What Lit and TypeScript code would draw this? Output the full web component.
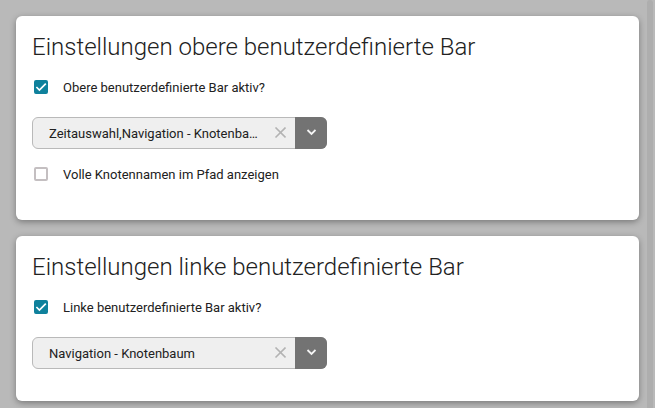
import { LitElement, html, css } from "lit";
import { customElement, property } from "lit/decorators.js";

@customElement("check-row")
class CheckRow extends LitElement {
  static styles = css`
    :host {
      display: block;
      margin-bottom: 21px;
    }
    .row {
      display: flex;
      align-items: center;
      gap: 15px;
      height: 18px;
      padding-left: 2px;
      font-size: 13px;
      line-height: 18px;
    }
    .text {
      padding-top: 2px;
    }
    .box {
      display: grid;
      flex: none;
      width: 14px;
      height: 14px;
    }
    .box > * {
      grid-area: 1 / 1;
    }
    .input {
      appearance: none;
      box-sizing: border-box;
      width: 14px;
      height: 14px;
      margin: 0;
      border: 2px solid #c4bfc1;
      border-radius: 2px;
      background: #fff;
    }
    .input:checked {
      border-color: #0f819c;
      background: #0f819c;
    }
    .tick {
      visibility: hidden;
      pointer-events: none;
    }
    .input:checked + .tick {
      visibility: visible;
    }
  `;

  @property() label = "";
  @property({ type: Boolean }) checked = false;

  render() {
    return html`
      <label class="row">
        <span class="box">
          <input class="input" type="checkbox" .checked=${this.checked} />
          <svg class="tick" width="14" height="14" viewBox="0 0 14 14" aria-hidden="true">
            <path d="M2.4 7 5.4 10 11.8 3.6" fill="none" stroke="#fff" stroke-width="1.7" />
          </svg>
        </span>
        <span class="text">${this.label}</span>
      </label>
    `;
  }
}

@customElement("clearable-select")
class ClearableSelect extends LitElement {
  static styles = css`
    :host {
      display: block;
      margin-bottom: 16px;
    }
    .field {
      display: grid;
      grid-template-columns: 1fr 30px 32px;
      max-width: 295px;
      height: 32px;
    }
    .select {
      grid-area: 1 / 1 / 2 / 4;
      appearance: none;
      box-sizing: border-box;
      width: 100%;
      height: 32px;
      margin: 0;
      padding: 1px 65px 0 16px;
      border: 1px solid #b9b9b9;
      border-radius: 6px;
      background: #efefef;
      color: #212121;
      font: inherit;
      font-size: 13px;
      text-overflow: ellipsis;
      white-space: nowrap;
      overflow: hidden;
    }
    .clear {
      grid-area: 1 / 2;
      display: grid;
      place-items: center;
      padding: 0;
      border: 0;
      background: none;
      z-index: 1;
    }
    .toggle {
      grid-area: 1 / 3;
      display: grid;
      place-items: center;
      border-radius: 0 6px 6px 0;
      background: #737373;
      pointer-events: none;
      z-index: 1;
    }
  `;

  @property() label = "";
  @property() value = "";

  render() {
    return html`
      <div class="field">
        <select class="select" aria-label=${this.label}>
          <option>${this.value}</option>
        </select>
        <button class="clear" type="button" aria-label="Auswahl löschen">
          <svg width="12" height="12" viewBox="0 0 12 12" aria-hidden="true">
            <path d="M1.5 0.5 11.5 10.5M11.5 0.5 1.5 10.5" fill="none" stroke="#b3b3b3" stroke-width="1.6" />
          </svg>
        </button>
        <span class="toggle">
          <svg width="10" height="10" viewBox="0 0 10 10" aria-hidden="true">
            <path d="M1.5 2 5.5 6 9.5 2" fill="none" stroke="#f4f4f4" stroke-width="1.8" />
          </svg>
        </span>
      </div>
    `;
  }
}

@customElement("app-root")
class AppRoot extends LitElement {
  static styles = css`
    :host {
      display: flex;
      box-sizing: border-box;
      height: 100vh;
      overflow: hidden;
      background: #b9b9b9;
      color: #212121;
      font-family: Roboto, "Liberation Sans", sans-serif;
    }
    .cards {
      flex: 1;
      min-width: 0;
      display: flex;
      flex-direction: column;
      gap: 16px;
      padding: 16px 8px 0 16px;
    }
    .card {
      flex: none;
      padding: 16px;
      border-radius: 6px;
      background: #fff;
      box-shadow: 0 2px 6px rgba(0, 0, 0, 0.35);
    }
    .title {
      margin: 0 0 15px;
      font-size: 24px;
      font-weight: 300;
      line-height: 31px;
    }
    .track {
      flex: none;
      width: 6px;
      margin-right: 2px;
      border-radius: 3px 3px 0 0;
      background: #aeaeae;
    }
  `;

  render() {
    return html`
      <main class="cards">
        <section class="card">
          <h2 class="title">Einstellungen obere benutzerdefinierte Bar</h2>
          <check-row label="Obere benutzerdefinierte Bar aktiv?" checked></check-row>
          <clearable-select
            label="Elemente der oberen Bar"
            value="Zeitauswahl,Navigation - Knotenbaum"
          ></clearable-select>
          <check-row label="Volle Knotennamen im Pfad anzeigen"></check-row>
        </section>
        <section class="card">
          <h2 class="title">Einstellungen linke benutzerdefinierte Bar</h2>
          <check-row label="Linke benutzerdefinierte Bar aktiv?" checked></check-row>
          <clearable-select
            label="Elemente der linken Bar"
            value="Navigation - Knotenbaum"
          ></clearable-select>
        </section>
      </main>
      <div class="track"></div>
    `;
  }
}
